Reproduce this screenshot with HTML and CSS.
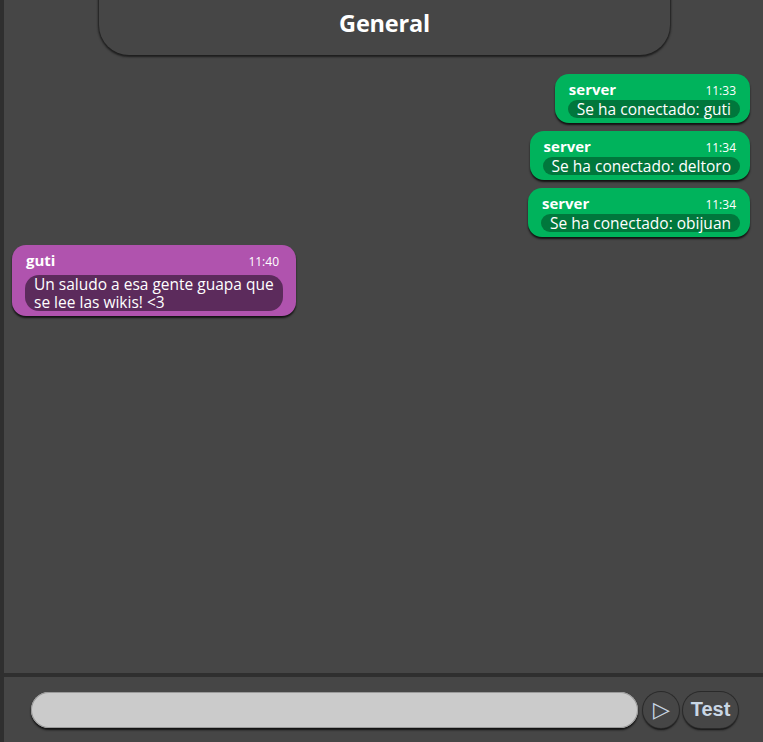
FILE: index.html
```html
<!DOCTYPE html>
<html lang="es">
<head>
<meta charset="utf-8">
<title>Chat</title>
<link rel="stylesheet" href="styles.css">
</head>
<body>
<div class="app">
  <div class="sidebar"></div>
  <main class="chat">
    <header class="room-header"><h1>General</h1></header>
    <section class="messages">
      <div class="msg msg-server">
        <div class="msg-head"><span class="msg-user">server</span><span class="msg-time">11:33</span></div>
        <div class="msg-body">Se ha conectado: guti</div>
      </div>
      <div class="msg msg-server">
        <div class="msg-head"><span class="msg-user">server</span><span class="msg-time">11:34</span></div>
        <div class="msg-body">Se ha conectado: deltoro</div>
      </div>
      <div class="msg msg-server">
        <div class="msg-head"><span class="msg-user">server</span><span class="msg-time">11:34</span></div>
        <div class="msg-body">Se ha conectado: obijuan</div>
      </div>
      <div class="msg msg-user-purple">
        <div class="msg-head"><span class="msg-user">guti</span><span class="msg-time">11:40</span></div>
        <div class="msg-body">Un saludo a esa gente guapa que se lee las wikis! &lt;3</div>
      </div>
    </section>
    <footer class="composer">
      <input class="composer-input" type="text">
      <button class="btn-send" type="button">&#9655;</button>
      <button class="btn-test" type="button">Test</button>
    </footer>
  </main>
</div>
</body>
</html>
```
FILE: styles.css
```css
html, body {
  margin: 0;
  padding: 0;
  height: 100%;
  background: #464646;
  font-family: "Open Sans", "Noto Sans", sans-serif;
  color: #fff;
}
.app {
  display: flex;
  height: 742px;
  overflow: hidden;
}
.sidebar {
  width: 4px;
  background: #2f2f2f;
}
.chat {
  flex: 1;
  display: flex;
  flex-direction: column;
  background: #464646;
}
.room-header {
  margin: -30px 93px 0 95px;
  height: 85px;
  background: #464646;
  border-radius: 0 0 30px 30px;
  box-shadow: 0 1px 2px 1px #1e1e1e;
  display: flex;
  align-items: flex-end;
  justify-content: center;
}
.room-header h1 {
  margin: 0 0 17px;
  font-size: 23.5px;
  font-weight: 700;
  line-height: 30px;
  letter-spacing: -0.2px;
}
.messages {
  flex: 1;
  display: flex;
  flex-direction: column;
  padding: 19px 13px 0 8px;
  gap: 8px;
}
.msg {
  border-radius: 14px;
  padding: 5px 10px 5px 13px;
  box-shadow: 0 2px 2px rgba(0,0,0,0.75);
}
.msg-server {
  align-self: flex-end;
  background: #00b35c;
}
.msg-user-purple {
  align-self: flex-start;
  background: #b053ae;
  padding: 5px 13px 5px 13px;
}
.msg-head {
  display: flex;
  justify-content: space-between;
  align-items: baseline;
  padding: 0 4px 0 1px;
  height: 21px;
}
.msg-user {
  font-weight: 700;
  font-size: 15px;
}
.msg-time {
  font-size: 12px;
}
.msg-body {
  border-radius: 10px;
  padding: 0 9px;
  font-size: 15.5px;
  line-height: 18px;
}
.msg-server .msg-body {
  background: #00773c;
  white-space: nowrap;
}
.msg-user-purple .msg-head {
  height: 25px;
}
.msg-user-purple .msg-body {
  background: #5c2b5c;
  padding: 0 9px;
  width: 240px;
  border-radius: 14px;
}
.composer {
  border-top: 4px solid #2f2f2f;
  height: 65px;
  display: flex;
  align-items: center;
  padding: 0 25px 0 27px;
  gap: 4px;
  background: #464646;
}
.composer-input {
  flex: 1;
  height: 36px;
  box-sizing: border-box;
  border: none;
  border-radius: 18px;
  background: #cbcbcb;
  box-shadow: 0 2px 2px #111, inset 0 0 0 1px #9a9a9a;
  outline: none;
  margin-right: 1px;
}
.btn-send, .btn-test {
  height: 36px;
  border: none;
  border-radius: 18px;
  background: #464646;
  box-shadow: 0 0 0 1px #2a2a2a, 0 2px 2px #111;
  color: #c9d6e4;
  font-family: "Liberation Sans", Arial, sans-serif;
  cursor: pointer;
  padding: 0;
}
.btn-send {
  width: 36px;
  font-size: 22px;
  line-height: 36px;
}
.btn-test {
  width: 55px;
  font-size: 20px;
  font-weight: 700;
}
```
